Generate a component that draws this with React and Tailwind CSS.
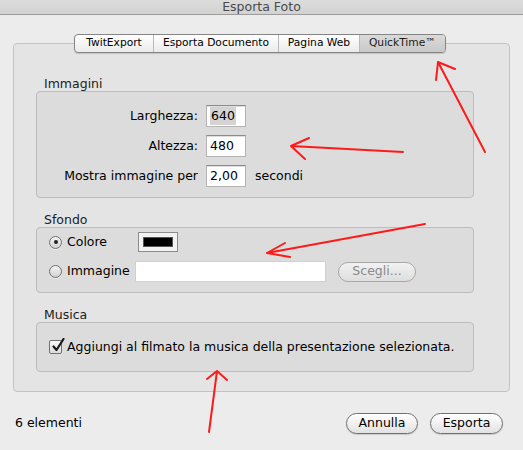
import React from "react";

const font = { fontFamily: '"DejaVu Sans", "Liberation Sans", sans-serif' };

const tabs = ["TwitExport", "Esporta Documento", "Pagina Web", "QuickTime™"];

function Radio({ checked }) {
  return (
    <span className="relative flex h-[13px] w-[13px] shrink-0 items-center justify-center rounded-full border border-[#6f6f6f] bg-gradient-to-b from-[#f4f4f4] to-[#d2d2d2] shadow-[0_1px_0_rgba(255,255,255,0.6)]">
      {checked && <span className="h-[4px] w-[4px] rounded-full bg-[#222]" />}
    </span>
  );
}

function Checkbox() {
  return (
    <span className="relative block h-[14px] w-[13px] shrink-0 rounded-[2px] border border-[#6f6f6f] bg-gradient-to-b from-[#fbfbfb] to-[#dcdcdc]">
      <svg
        className="absolute -top-[3px] left-[1px]"
        width="14"
        height="15"
        viewBox="0 0 14 15"
      >
        <path
          d="M2.5 8.5 L5.5 12 L12.5 1"
          fill="none"
          stroke="#1a1a1a"
          strokeWidth="2.2"
          strokeLinecap="round"
          strokeLinejoin="round"
        />
      </svg>
    </span>
  );
}

function TextField({ children, className = "" }) {
  return (
    <div
      className={`flex items-center border border-[#b4b4b4] border-t-[#8c8c8c] bg-white pl-[3px] text-black shadow-[inset_0_1px_0_#dedede] ${className}`}
    >
      {children}
    </div>
  );
}

function PushButton({ children, disabled, className = "" }) {
  return (
    <button
      className={`flex items-center justify-center rounded-full border text-[12.5px] ${
        disabled
          ? "h-[20px] border-[#a8a8a8] bg-gradient-to-b from-[#f2f2f2] to-[#dedede] text-[#8a8a8a]"
          : "h-[21px] border-[#707070] bg-gradient-to-b from-white to-[#e2e2e2] text-black shadow-[0_1px_1px_rgba(0,0,0,0.15)]"
      } ${className}`}
    >
      {children}
    </button>
  );
}

function Group({ title, children, className = "" }) {
  return (
    <div>
      <div className="pl-[8px] text-[12.5px] leading-[15px] text-[#1c1c1c]">{title}</div>
      <div
        className={`rounded-[4px] border border-[#bdbdbd] bg-[#dcdcdc] ${className}`}
      >
        {children}
      </div>
    </div>
  );
}

export default function App() {
  return (
    <div
      className="relative h-[450px] w-[523px] overflow-hidden bg-[#ececec] text-[12.5px]"
      style={font}
    >
      {/* TITLE BAR */}
      <div className="h-[15px] border-b border-[#9c9c9c] bg-gradient-to-b from-[#dcdcdc] to-[#d2d2d2]">
        <div className="text-center text-[12.5px] leading-[13px] text-[#4a4a4a]">
          Esporta Foto
        </div>
      </div>

      {/* TAB PANEL */}
      <div className="mx-[13px] mt-[28px] h-[349px] rounded-[4px] border border-[#c3c3c3] bg-[#e4e4e4]">
        <div className="-mt-[10px] flex justify-center pr-[3px]">
          <div className="flex h-[19px] overflow-hidden rounded-[4px] border border-[#858585] bg-gradient-to-b from-white to-[#ebebeb] text-[10.7px] text-black shadow-[0_1px_1px_rgba(0,0,0,0.15)]">
            {tabs.map((t, i) => (
              <div
                key={t}
                className={`flex items-center justify-center ${
                  i > 0 ? "border-l border-[#b9b9b9]" : ""
                } ${
                  i === 3
                    ? "bg-gradient-to-b from-[#dadada] to-[#c9c9c9] text-[#1a1a1a]"
                    : ""
                }`}
                style={{ width: [78, 125, 81, 86][i] }}
              >
                {t}
              </div>
            ))}
          </div>
        </div>

        <div className="ml-[22px] mr-[35px] mt-[23px] flex flex-col gap-[14px]">
          {/* IMMAGINI */}
          <Group title="Immagini" className="h-[107px] pt-[13px]">
            <div className="grid grid-cols-[161px_40px_auto] items-center gap-x-[8px] gap-y-[8px] text-black">
              <span className="text-right">Larghezza:</span>
              <TextField className="h-[22px] w-[40px]">
                <span className="bg-[#d4d4d4] px-[1px]">640</span>
              </TextField>
              <span />
              <span className="text-right">Altezza:</span>
              <TextField className="h-[22px] w-[40px]">480</TextField>
              <span />
              <span className="text-right">Mostra immagine per</span>
              <TextField className="h-[22px] w-[40px]">2,00</TextField>
              <span className="pl-[1px]">secondi</span>
            </div>
          </Group>

          {/* SFONDO */}
          <Group title="Sfondo" className="h-[66px] pl-[12px] pt-[4px]">
            <div className="flex h-[20px] items-center text-black">
              <Radio checked />
              <span className="ml-[5px] w-[71px]">Colore</span>
              <div className="flex h-[20px] w-[40px] items-center justify-center border border-[#8c8c8c] bg-[#f2f2f2]">
                <div className="h-[10px] w-[30px] border border-[#555] bg-black" />
              </div>
            </div>
            <div className="mt-[9px] flex h-[21px] items-center text-black">
              <Radio />
              <span className="ml-[5px] w-[68px]">Immagine</span>
              <div className="h-[21px] w-[191px] border border-[#d0d0d0] bg-white" />
              <PushButton disabled className="ml-[12px] w-[78px]">
                Scegli...
              </PushButton>
            </div>
          </Group>

          {/* MUSICA */}
          <Group title="Musica" className="flex h-[50px] items-center pl-[12px]">
            <Checkbox />
            <span className="ml-[5px] text-black">
              Aggiungi al filmato la musica della presentazione selezionata.
            </span>
          </Group>
        </div>
      </div>

      {/* FOOTER */}
      <div className="mt-[21px] flex items-center justify-between pl-[15px] pr-[20px] text-black">
        <span>6 elementi</span>
        <div className="flex gap-[12px]">
          <PushButton className="w-[72px]">Annulla</PushButton>
          <PushButton className="w-[73px]">Esporta</PushButton>
        </div>
      </div>

      {/* RED ANNOTATIONS */}
      <svg
        className="pointer-events-none absolute left-0 top-0"
        width="523"
        height="450"
        viewBox="0 0 523 450"
      >
        <g fill="none" stroke="#ff1a1a" strokeWidth="2" strokeLinecap="round">
          <path d="M485 152 L438 62 M438 62 L455 69 M438 62 L436 80" />
          <path d="M403 152 L291 146 M291 146 L309 138 M291 146 L305 159" />
          <path d="M425 224 L267 253 M267 253 L285 243 M267 253 L290 257" />
          <path d="M209 432 L217 371 M217 371 L207 379 M217 371 L227 380" />
        </g>
      </svg>
    </div>
  );
}
